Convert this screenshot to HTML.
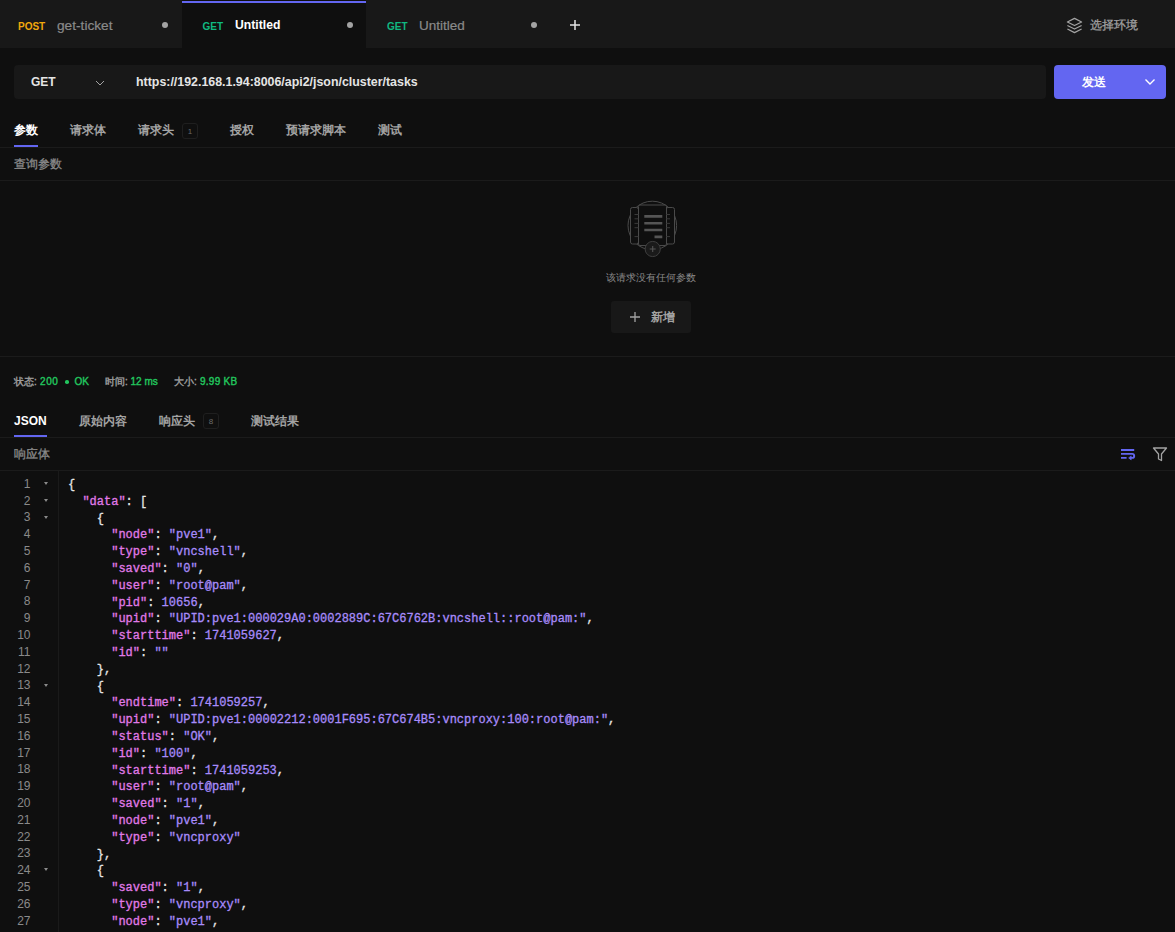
<!DOCTYPE html>
<html><head><meta charset="utf-8">
<style>
*{margin:0;padding:0;box-sizing:border-box}
html,body{width:1175px;height:932px;overflow:hidden;background:#0f0f0f;font-family:"Liberation Sans",sans-serif;color:#a3a3a3}
.a{position:absolute;white-space:nowrap}
#tabbar{position:absolute;left:0;top:0;width:1175px;height:48px;background:#181818}
.tab{position:absolute;top:0;height:48px}
.meth{position:absolute;top:20.6px;font-size:10px;font-weight:bold;line-height:12px}
.ttl{position:absolute;top:17px;font-size:12.5px;font-weight:bold;line-height:15px}
.dot{position:absolute;top:22px;width:6px;height:6px;border-radius:50%;background:#a3a3a3}
.hl{position:absolute;left:0;width:1175px;height:1px;background:#1b1b1b}
.code{position:absolute;left:0;top:477px;width:1175px;font-family:"Liberation Mono",monospace;font-size:12px;line-height:16.8px}
.ln{position:absolute;left:0;width:30.5px;text-align:right;color:#8a8a8a;font-family:"Liberation Sans",sans-serif;font-size:12px}
.fold{position:absolute;left:44px;width:0;height:0;border-left:2px solid transparent;border-right:2px solid transparent;border-top:3px solid #8a8a8a}
.cl{position:absolute;left:68px;white-space:pre;color:#e5e5e5;-webkit-text-stroke-width:0.3px}
.k{color:#e07ae8}.s{color:#a78bfa}.n{color:#a78bfa}
</style></head><body>
<div id="tabbar">
  <div class="tab" style="left:0;width:182px">
    <span class="a meth" style="left:18px;color:#f0a80c">POST</span>
    <span class="a ttl" style="left:57px;top:17.5px;color:#8a8a8a;font-weight:normal;font-size:13.7px;-webkit-text-stroke:0.2px #8a8a8a">get-ticket</span>
    <span class="dot" style="left:162px"></span>
  </div>
  <div class="tab" style="left:182px;width:184px;background:#0f0f0f">
    <div class="a" style="left:0;top:1px;width:184px;height:2px;background:#6366f1"></div>
    <span class="a meth" style="left:20.5px;color:#10b981">GET</span>
    <span class="a ttl" style="left:53px;top:18px;color:#ffffff;font-size:12.2px">Untitled</span>
    <span class="dot" style="left:165px"></span>
  </div>
  <div class="tab" style="left:366px;width:184px">
    <span class="a meth" style="left:21px;color:#10b981">GET</span>
    <span class="a ttl" style="left:53px;top:17.5px;color:#8a8a8a;font-weight:normal;font-size:13.5px;-webkit-text-stroke:0.2px #8a8a8a">Untitled</span>
    <span class="dot" style="left:165px"></span>
  </div>
  <svg class="a" style="left:568px;top:18px" width="14" height="14" viewBox="0 0 14 14"><path d="M7 2v10M2 7h10" stroke="#e5e5e5" stroke-width="1.5"/></svg>
  <svg class="a" style="left:1066px;top:17px" width="17" height="17" viewBox="0 0 24 24" fill="none" stroke="#a3a3a3" stroke-width="1.8" stroke-linejoin="round"><path d="M12 2 2 7l10 5 10-5-10-5z"/><path d="m2 17 10 5 10-5"/><path d="m2 12 10 5 10-5"/></svg>
  <span class="a" style="left:1090px;top:18px;font-size:12px;line-height:14px;color:#a3a3a3;-webkit-text-stroke:0.25px #a3a3a3">选择环境</span>
</div>

<!-- URL bar -->
<div class="a" style="left:14px;top:65px;width:1032px;height:34px;background:#181818;border-radius:4px"></div>
<span class="a" style="left:31px;top:75px;font-size:12px;font-weight:bold;line-height:14px;color:#e5e5e5">GET</span>
<svg class="a" style="left:95px;top:78.5px" width="10" height="8" viewBox="0 0 10 8"><path d="M1 2l4 4 4-4" stroke="#a3a3a3" stroke-width="1" fill="none"/></svg>
<span class="a" style="left:136px;top:75px;font-size:12.4px;font-weight:bold;line-height:14px;color:#e5e5e5">https://192.168.1.94:8006/api2/json/cluster/tasks</span>
<div class="a" style="left:1054px;top:65px;width:112px;height:34px;background:#6366f1;border-radius:4px"></div>
<span class="a" style="left:1082px;top:75px;font-size:12px;font-weight:bold;line-height:14px;color:#ffffff">发送</span>
<svg class="a" style="left:1144px;top:78px" width="12" height="8" viewBox="0 0 12 8"><path d="M1.5 1.5l4.5 4.5 4.5-4.5" stroke="#ffffff" stroke-width="1.4" fill="none"/></svg>

<!-- request tabs -->
<span class="a" style="left:14px;top:123px;font-size:12px;line-height:14px;color:#ffffff;font-weight:bold">参数</span>
<div class="a" style="left:14px;top:145px;width:24px;height:2px;background:#6366f1"></div>
<span class="a" style="left:70px;top:123px;font-size:12px;line-height:14px;color:#a3a3a3;font-weight:bold">请求体</span>
<span class="a" style="left:138px;top:123px;font-size:12px;line-height:14px;color:#a3a3a3;font-weight:bold">请求头</span>
<div class="a" style="left:182px;top:123px;width:16px;height:16px;border:1px solid #1f1f1f;border-radius:3px;font-size:8px;line-height:15px;text-align:center;color:#6b6b6b">1</div>
<span class="a" style="left:230px;top:123px;font-size:12px;line-height:14px;color:#a3a3a3;font-weight:bold">授权</span>
<span class="a" style="left:286px;top:123px;font-size:12px;line-height:14px;color:#a3a3a3;font-weight:bold">预请求脚本</span>
<span class="a" style="left:378px;top:123px;font-size:12px;line-height:14px;color:#a3a3a3;font-weight:bold">测试</span>
<div class="hl" style="top:147px"></div>
<span class="a" style="left:14px;top:157px;font-size:12px;line-height:14px;color:#8a8a8a;-webkit-text-stroke:0.3px #8a8a8a">查询参数</span>
<div class="hl" style="top:180px"></div>

<!-- empty state -->
<svg class="a" style="left:620px;top:195px" width="64" height="67" viewBox="620 195 64 67" fill="none" stroke="#4a4a4a" stroke-width="1">
  <circle cx="652.3" cy="225.5" r="24.3"/>
  <rect x="630.5" y="207.5" width="8" height="36.5" rx="2" fill="#0f0f0f"/>
  <rect x="666" y="207.5" width="8.5" height="36.5" rx="2" fill="#0f0f0f"/>
  <rect x="638.5" y="205" width="28" height="40.5" rx="1.5" fill="#0f0f0f"/>
  <path d="M634.5 214.5h4M634.5 218.8h4M634.5 223.4h4M634.5 227.7h4M634.5 236.6h4M666 214.5h4M666 218.8h4M666 223.4h4M666 227.7h4M666 236.6h4" stroke="#3a3a3a"/>
  <path d="M644.3 216.4h18M644.3 223.2h18M644.3 230h18M654.5 236.9h7.8" stroke="#555" stroke-width="2.6"/>
  <circle cx="652.7" cy="249" r="7.6" fill="#1a1a1a" stroke="#3f3f3f"/>
  <path d="M652.7 246v6M649.7 249h6" stroke="#555" stroke-width="1.1"/>
</svg>
<span class="a" style="left:606px;top:272px;font-size:10px;line-height:12px;color:#8a8a8a">该请求没有任何参数</span>
<div class="a" style="left:611px;top:301px;width:80px;height:32px;background:#181818;border-radius:3px"></div>
<svg class="a" style="left:630px;top:312px" width="10" height="10" viewBox="0 0 10 10"><path d="M5 0v10M0 5h10" stroke="#a3a3a3" stroke-width="1.3"/></svg>
<span class="a" style="left:651px;top:310px;font-size:12px;line-height:14px;color:#a3a3a3;font-weight:bold">新增</span>
<div class="hl" style="top:356px"></div>

<!-- status -->
<div class="a" style="left:0;top:376px;font-size:10px;line-height:12px;color:#9e9e9e;-webkit-text-stroke-width:0.4px">
<span class="a" style="left:14px;top:0">状态:</span>
<span class="a" style="left:40px;top:0;color:#22c55e;letter-spacing:0.6px">200</span>
<span class="a" style="left:65.2px;top:4.2px;width:3.6px;height:3.6px;border-radius:50%;background:#22c55e"></span>
<span class="a" style="left:74.5px;top:0;color:#22c55e">OK</span>
<span class="a" style="left:105px;top:0">时间:</span>
<span class="a" style="left:130.5px;top:0;color:#22c55e">12 ms</span>
<span class="a" style="left:174px;top:0">大小:</span>
<span class="a" style="left:200px;top:0;color:#22c55e;letter-spacing:0.25px">9.99 KB</span>
</div>

<!-- response tabs -->
<span class="a" style="left:14px;top:414px;font-size:12px;line-height:14px;color:#ffffff;font-weight:bold">JSON</span>
<div class="a" style="left:14px;top:435px;width:33px;height:2px;background:#6366f1"></div>
<span class="a" style="left:79px;top:414px;font-size:12px;line-height:14px;color:#a3a3a3;font-weight:bold">原始内容</span>
<span class="a" style="left:159px;top:414px;font-size:12px;line-height:14px;color:#a3a3a3;font-weight:bold">响应头</span>
<div class="a" style="left:203px;top:413px;width:16px;height:16px;border:1px solid #1f1f1f;border-radius:3px;font-size:8px;line-height:15px;text-align:center;color:#6b6b6b">8</div>
<span class="a" style="left:251px;top:414px;font-size:12px;line-height:14px;color:#a3a3a3;font-weight:bold">测试结果</span>
<div class="hl" style="top:437px"></div>
<span class="a" style="left:14px;top:446.5px;font-size:12px;line-height:14px;color:#8a8a8a;-webkit-text-stroke:0.3px #8a8a8a">响应体</span>
<svg class="a" style="left:1119.8px;top:448px" width="16" height="14" viewBox="0 0 16 14" fill="none" stroke="#6366f1" stroke-width="1.9"><path d="M1 2h13.2M1 5.9h11.2a2 2 0 0 1 0 4H10M1 9.9h5.6"/><path d="M11.2 7.9L8.6 9.9l2.6 2z" fill="#6366f1" stroke-width="0.6" stroke-linejoin="round"/></svg>
<svg class="a" style="left:1152px;top:446px" width="16" height="16" viewBox="0 0 16 16" fill="none" stroke="#a3a3a3" stroke-width="1.3" stroke-linejoin="round"><path d="M1.5 2h13l-5 6v6.5l-3-1.5V8z"/></svg>
<div class="hl" style="top:470px"></div>

<!-- code -->
<div class="a" style="left:58px;top:471px;width:1px;height:461px;background:#1a1a1a"></div>
<div id="code" class="code">
<div class="ln" style="top:-1.2px">1</div>
<div class="fold" style="top:5.0px"></div>
<div class="cl" style="top:0.0px;left:68.0px">{</div>
<div class="ln" style="top:15.6px">2</div>
<div class="fold" style="top:21.8px"></div>
<div class="cl" style="top:16.8px;left:82.4px"><span class="k">"data"</span>: [</div>
<div class="ln" style="top:32.4px">3</div>
<div class="fold" style="top:38.6px"></div>
<div class="cl" style="top:33.6px;left:96.8px">{</div>
<div class="ln" style="top:49.2px">4</div>
<div class="cl" style="top:50.4px;left:111.2px"><span class="k">"node"</span>: <span class="s">&quot;pve1&quot;</span>,</div>
<div class="ln" style="top:66.0px">5</div>
<div class="cl" style="top:67.2px;left:111.2px"><span class="k">"type"</span>: <span class="s">&quot;vncshell&quot;</span>,</div>
<div class="ln" style="top:82.8px">6</div>
<div class="cl" style="top:84.0px;left:111.2px"><span class="k">"saved"</span>: <span class="s">&quot;0&quot;</span>,</div>
<div class="ln" style="top:99.6px">7</div>
<div class="cl" style="top:100.8px;left:111.2px"><span class="k">"user"</span>: <span class="s">&quot;root@pam&quot;</span>,</div>
<div class="ln" style="top:116.4px">8</div>
<div class="cl" style="top:117.6px;left:111.2px"><span class="k">"pid"</span>: <span class="n">10656</span>,</div>
<div class="ln" style="top:133.2px">9</div>
<div class="cl" style="top:134.4px;left:111.2px"><span class="k">"upid"</span>: <span class="s">&quot;UPID:pve1:000029A0:0002889C:67C6762B:vncshell::root@pam:&quot;</span>,</div>
<div class="ln" style="top:150.0px">10</div>
<div class="cl" style="top:151.2px;left:111.2px"><span class="k">"starttime"</span>: <span class="n">1741059627</span>,</div>
<div class="ln" style="top:166.8px">11</div>
<div class="cl" style="top:168.0px;left:111.2px"><span class="k">"id"</span>: <span class="s">&quot;&quot;</span></div>
<div class="ln" style="top:183.6px">12</div>
<div class="cl" style="top:184.8px;left:96.8px">},</div>
<div class="ln" style="top:200.4px">13</div>
<div class="fold" style="top:206.6px"></div>
<div class="cl" style="top:201.6px;left:96.8px">{</div>
<div class="ln" style="top:217.2px">14</div>
<div class="cl" style="top:218.4px;left:111.2px"><span class="k">"endtime"</span>: <span class="n">1741059257</span>,</div>
<div class="ln" style="top:234.0px">15</div>
<div class="cl" style="top:235.2px;left:111.2px"><span class="k">"upid"</span>: <span class="s">&quot;UPID:pve1:00002212:0001F695:67C674B5:vncproxy:100:root@pam:&quot;</span>,</div>
<div class="ln" style="top:250.8px">16</div>
<div class="cl" style="top:252.0px;left:111.2px"><span class="k">"status"</span>: <span class="s">&quot;OK&quot;</span>,</div>
<div class="ln" style="top:267.6px">17</div>
<div class="cl" style="top:268.8px;left:111.2px"><span class="k">"id"</span>: <span class="s">&quot;100&quot;</span>,</div>
<div class="ln" style="top:284.4px">18</div>
<div class="cl" style="top:285.6px;left:111.2px"><span class="k">"starttime"</span>: <span class="n">1741059253</span>,</div>
<div class="ln" style="top:301.2px">19</div>
<div class="cl" style="top:302.4px;left:111.2px"><span class="k">"user"</span>: <span class="s">&quot;root@pam&quot;</span>,</div>
<div class="ln" style="top:318.0px">20</div>
<div class="cl" style="top:319.2px;left:111.2px"><span class="k">"saved"</span>: <span class="s">&quot;1&quot;</span>,</div>
<div class="ln" style="top:334.8px">21</div>
<div class="cl" style="top:336.0px;left:111.2px"><span class="k">"node"</span>: <span class="s">&quot;pve1&quot;</span>,</div>
<div class="ln" style="top:351.6px">22</div>
<div class="cl" style="top:352.8px;left:111.2px"><span class="k">"type"</span>: <span class="s">&quot;vncproxy&quot;</span></div>
<div class="ln" style="top:368.4px">23</div>
<div class="cl" style="top:369.6px;left:96.8px">},</div>
<div class="ln" style="top:385.2px">24</div>
<div class="fold" style="top:391.4px"></div>
<div class="cl" style="top:386.4px;left:96.8px">{</div>
<div class="ln" style="top:402.0px">25</div>
<div class="cl" style="top:403.2px;left:111.2px"><span class="k">"saved"</span>: <span class="s">&quot;1&quot;</span>,</div>
<div class="ln" style="top:418.8px">26</div>
<div class="cl" style="top:420.0px;left:111.2px"><span class="k">"type"</span>: <span class="s">&quot;vncproxy&quot;</span>,</div>
<div class="ln" style="top:435.6px">27</div>
<div class="cl" style="top:436.8px;left:111.2px"><span class="k">"node"</span>: <span class="s">&quot;pve1&quot;</span>,</div>
</div>
</body></html>
